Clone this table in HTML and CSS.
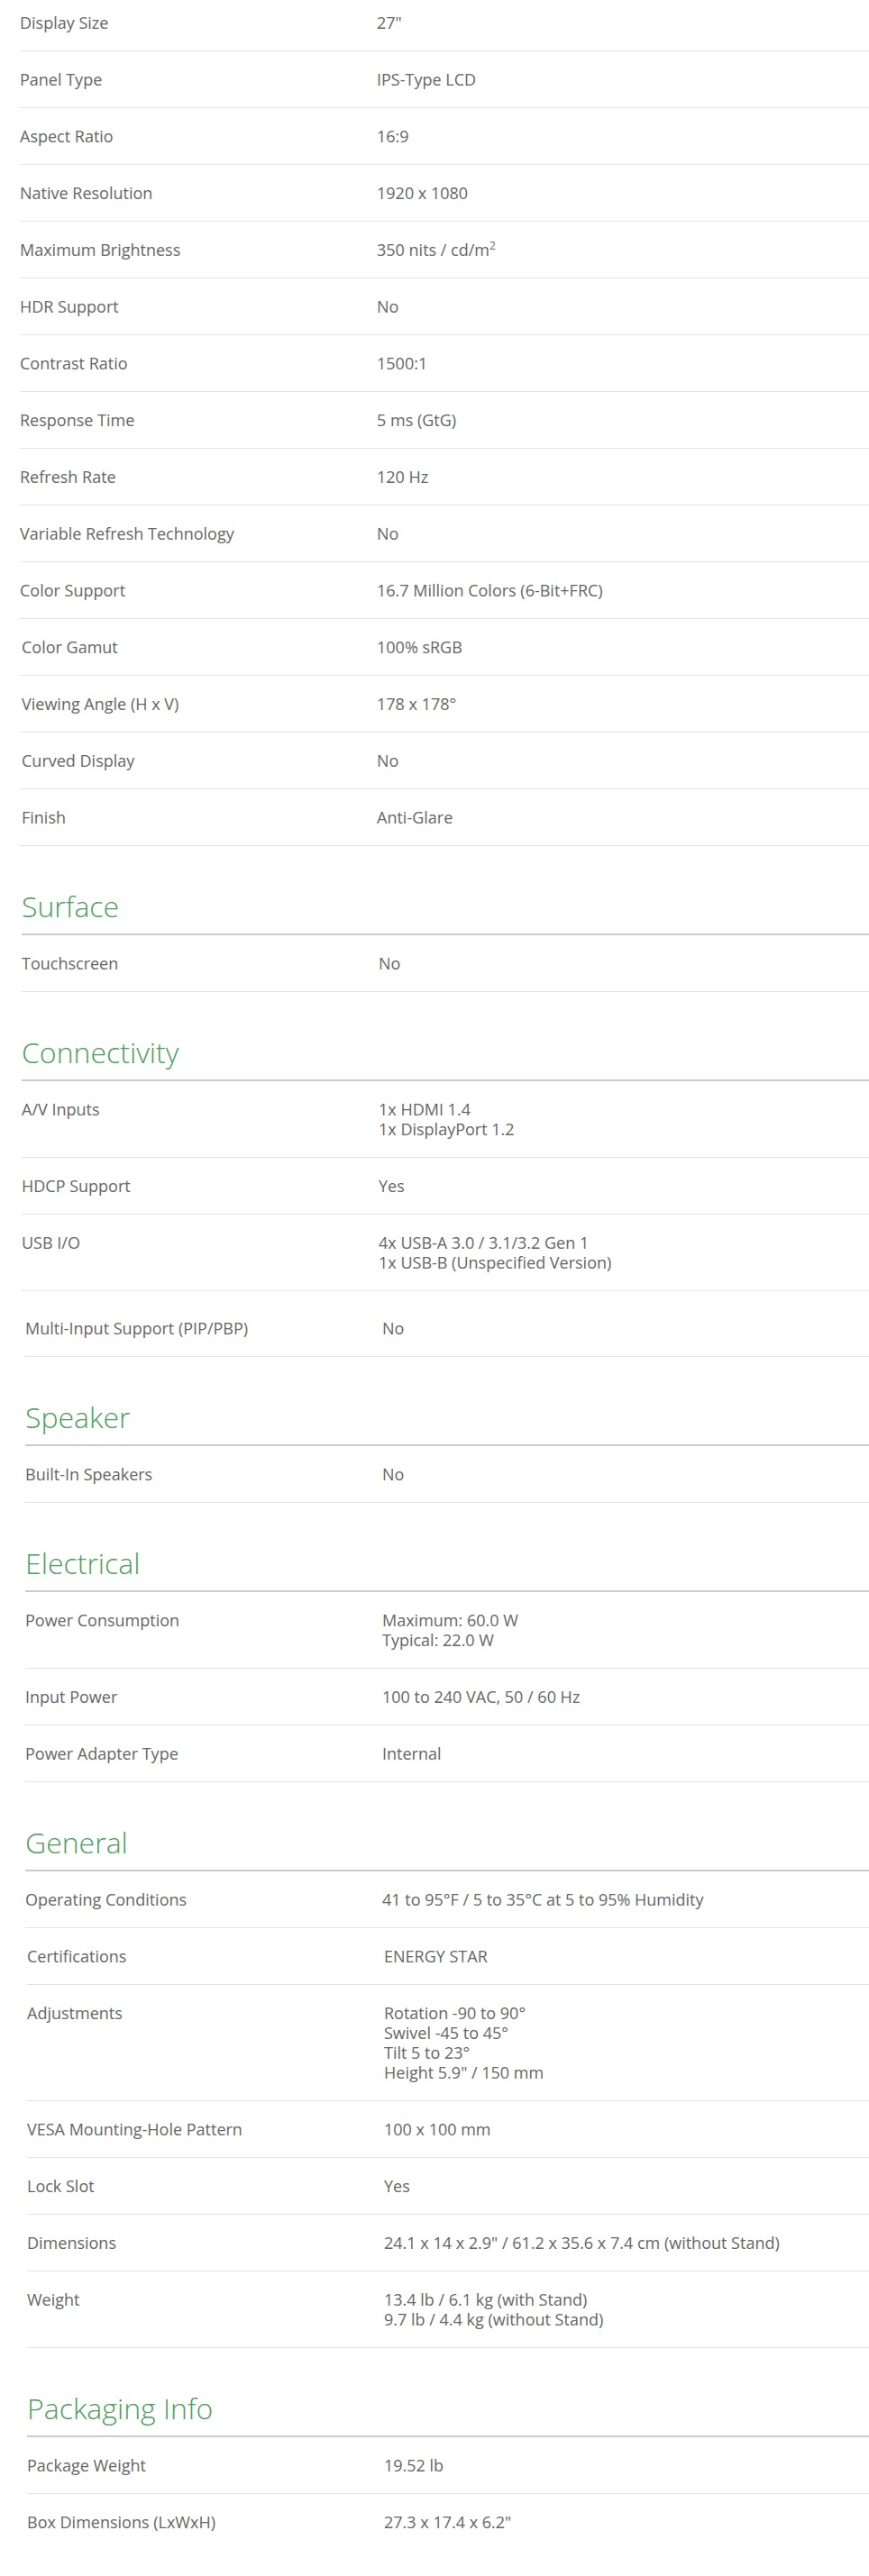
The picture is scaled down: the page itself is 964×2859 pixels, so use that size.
FILE: index.html
```html
<!DOCTYPE html>
<html lang="en">
<head>
<meta charset="utf-8">
<title>Specifications</title>
<link rel="stylesheet" href="styles.css">
</head>
<body>
<div class="specs">
  <section class="group group-display">
    <div class="row"><div class="label">Display Size</div><div class="value">27"</div></div>
    <div class="row"><div class="label">Panel Type</div><div class="value">IPS-Type LCD</div></div>
    <div class="row"><div class="label">Aspect Ratio</div><div class="value">16:9</div></div>
    <div class="row"><div class="label">Native Resolution</div><div class="value">1920 x 1080</div></div>
    <div class="row"><div class="label">Maximum Brightness</div><div class="value">350 nits / cd/m<sup>2</sup></div></div>
    <div class="row"><div class="label">HDR Support</div><div class="value">No</div></div>
    <div class="row"><div class="label">Contrast Ratio</div><div class="value">1500:1</div></div>
    <div class="row"><div class="label">Response Time</div><div class="value">5 ms (GtG)</div></div>
    <div class="row"><div class="label">Refresh Rate</div><div class="value">120 Hz</div></div>
    <div class="row"><div class="label">Variable Refresh Technology</div><div class="value">No</div></div>
    <div class="row"><div class="label">Color Support</div><div class="value">16.7 Million Colors (6-Bit+FRC)</div></div>
    <div class="row row-nudge"><div class="label">Color Gamut</div><div class="value">100% sRGB</div></div>
    <div class="row row-nudge"><div class="label">Viewing Angle (H x V)</div><div class="value">178 x 178°</div></div>
    <div class="row row-nudge"><div class="label">Curved Display</div><div class="value">No</div></div>
    <div class="row row-nudge"><div class="label">Finish</div><div class="value">Anti-Glare</div></div>
  </section>

  <section class="group group-surface">
    <h2 class="group-title">Surface</h2>
    <div class="row"><div class="label">Touchscreen</div><div class="value">No</div></div>
  </section>

  <section class="group group-connectivity">
    <h2 class="group-title">Connectivity</h2>
    <div class="row"><div class="label">A/V Inputs</div><div class="value">1x HDMI 1.4<br>1x DisplayPort 1.2</div></div>
    <div class="row"><div class="label">HDCP Support</div><div class="value">Yes</div></div>
    <div class="row"><div class="label">USB I/O</div><div class="value">4x USB-A 3.0 / 3.1/3.2 Gen 1<br>1x USB-B (Unspecified Version)</div></div>
    <div class="row row-tall row-shift"><div class="label">Multi-Input Support (PIP/PBP)</div><div class="value">No</div></div>
  </section>

  <section class="group group-speaker">
    <h2 class="group-title">Speaker</h2>
    <div class="row"><div class="label">Built-In Speakers</div><div class="value">No</div></div>
  </section>

  <section class="group group-electrical">
    <h2 class="group-title">Electrical</h2>
    <div class="row"><div class="label">Power Consumption</div><div class="value">Maximum: 60.0 W<br>Typical: 22.0 W</div></div>
    <div class="row"><div class="label">Input Power</div><div class="value">100 to 240 VAC, 50 / 60 Hz</div></div>
    <div class="row"><div class="label">Power Adapter Type</div><div class="value">Internal</div></div>
  </section>

  <section class="group group-general">
    <h2 class="group-title">General</h2>
    <div class="row"><div class="label">Operating Conditions</div><div class="value">41 to 95°F / 5 to 35°C at 5 to 95% Humidity</div></div>
    <div class="row row-shift2"><div class="label">Certifications</div><div class="value">ENERGY STAR</div></div>
    <div class="row row-shift2"><div class="label">Adjustments</div><div class="value">Rotation -90 to 90°<br>Swivel -45 to 45°<br>Tilt 5 to 23°<br>Height 5.9" / 150 mm</div></div>
    <div class="row row-shift2"><div class="label">VESA Mounting-Hole Pattern</div><div class="value">100 x 100 mm</div></div>
    <div class="row row-shift2"><div class="label">Lock Slot</div><div class="value">Yes</div></div>
    <div class="row row-shift2"><div class="label">Dimensions</div><div class="value">24.1 x 14 x 2.9" / 61.2 x 35.6 x 7.4 cm (without Stand)</div></div>
    <div class="row row-shift2"><div class="label">Weight</div><div class="value">13.4 lb / 6.1 kg (with Stand)<br>9.7 lb / 4.4 kg (without Stand)</div></div>
  </section>

  <section class="group group-packaging">
    <h2 class="group-title">Packaging Info</h2>
    <div class="row"><div class="label">Package Weight</div><div class="value">19.52 lb</div></div>
    <div class="row"><div class="label">Box Dimensions (LxWxH)</div><div class="value">27.3 x 17.4 x 6.2"</div></div>
  </section>
</div>
</body>
</html>
```

FILE: styles.css
```css
html, body {
  margin: 0;
  padding: 0;
  background: #ffffff;
}

body {
  font-family: "Open Sans", "Liberation Sans", sans-serif;
  color: #666666;
  overflow-x: hidden;
}

.specs {
  margin-top: -6px;
}

.group {
  display: block;
}

.group-display { margin-left: 22px; }
.group-surface { margin-left: 24px; }
.group-connectivity { margin-left: 24px; }
.group-speaker { margin-left: 28px; }
.group-electrical { margin-left: 28px; }
.group-general { margin-left: 28px; }
.group-packaging { margin-left: 30px; }

.group-title {
  margin: 45px 0 0 0;
  padding: 0 0 8px 0;
  font-size: 32px;
  line-height: 44px;
  font-weight: 300;
  color: #4c9e5e;
  border-bottom: 2px solid #cbcbcb;
}

.row {
  display: grid;
  grid-template-columns: 396px 1fr;
  padding: 20px 0;
  font-size: 18px;
  line-height: 22px;
  border-bottom: 1px solid #e4e4e4;
}

.group:last-child .row:last-child {
  border-bottom: none;
}

.row-nudge .label {
  padding-left: 2px;
}

.row-tall {
  padding-top: 30px;
}

.row-shift {
  margin-left: 4px;
}

.row-shift2 {
  margin-left: 2px;
}

.label,
.value {
  white-space: nowrap;
}

.value sup {
  font-size: 12px;
  line-height: 0;
  vertical-align: 7px;
}
```
